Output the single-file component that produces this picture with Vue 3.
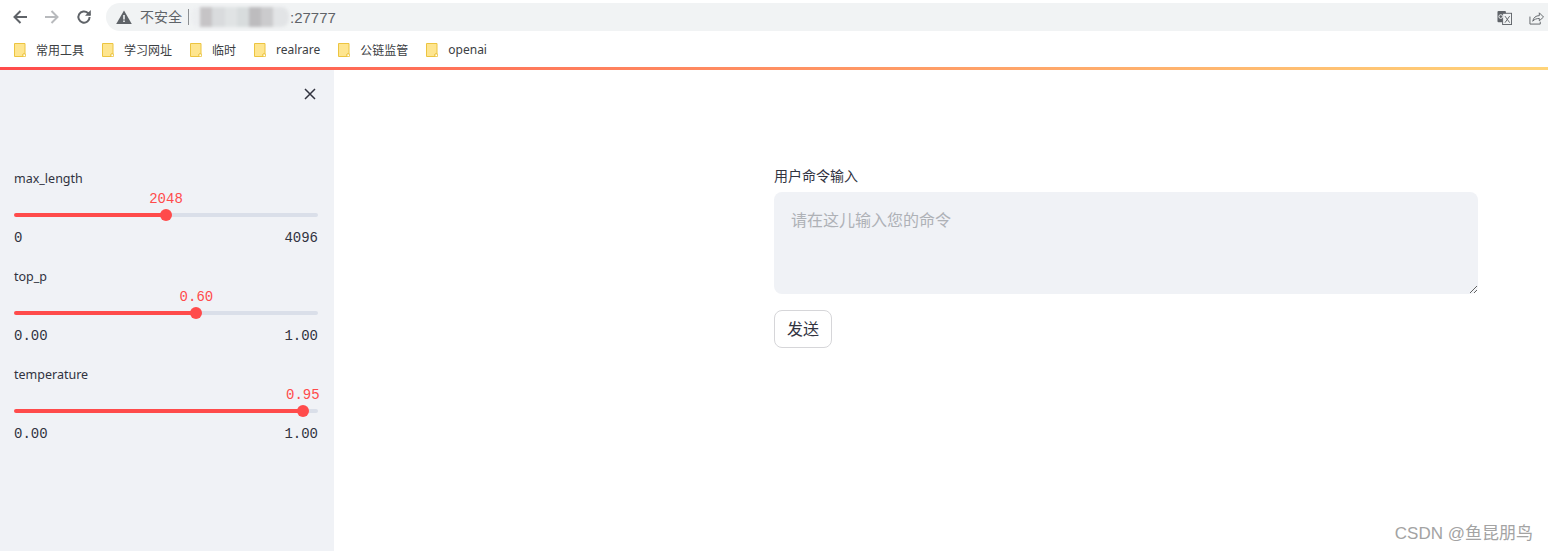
<script setup>
const bookmarks = [
  { name: '常用工具' },
  { name: '学习网址' },
  { name: '临时' },
  { name: 'realrare' },
  { name: '公链监管' },
  { name: 'openai' }
]
const sliders = [
  { label: 'max_length', value: '2048', min: '0', max: '4096', pct: 50 },
  { label: 'top_p', value: '0.60', min: '0.00', max: '1.00', pct: 60 },
  { label: 'temperature', value: '0.95', min: '0.00', max: '1.00', pct: 95 }
]
const blurs = [
  { w: 9, c: '#eceef0' }, { w: 12, c: '#c6c4c6' }, { w: 13, c: '#d9dbdd' }, { w: 12, c: '#e0e3e4' },
  { w: 12, c: '#d8dcdd' }, { w: 12, c: '#bdbcbe' }, { w: 12, c: '#cbcbcd' }, { w: 16, c: '#e2e4e6' }
]
</script>

<template>
  <div class="page">
    <header class="toolbar">
      <div class="nav">
        <svg class="nav-icon" viewBox="0 0 16 16" fill="none" stroke="#5f6368" stroke-width="2"><path d="M15 8H2.500M8.500 2L2.500 8l6 6" /></svg>
        <svg class="nav-icon" viewBox="0 0 16 16" fill="none" stroke="#b8babd" stroke-width="2"><path d="M1 8h12.500M7.500 2l6 6-6 6" /></svg>
        <svg class="nav-icon" viewBox="0 0 16 16" fill="none" stroke="#5f6368" stroke-width="2"><path d="M13.600 8a5.600 5.600 0 1 1-1.700-4L14 6" /><path d="M14.800 1v5.800H9z" fill="#5f6368" stroke="none" /></svg>
      </div>
      <div class="omnibox">
        <svg class="warn" viewBox="0 0 16 14"><path d="M8 0.500L15.800 14H0.200z" fill="#5f6368" /><path d="M7.200 5h1.600v4.600H7.200zM7.200 10.600h1.600v1.500H7.200z" fill="#f1f3f4" /></svg>
        <span class="insecure">不安全</span>
        <span class="sep"></span>
        <span class="blurred"><i v-for="(b, i) in blurs" :key="i" :style="{ width: b.w + 'px', background: b.c }"></i></span>
        <span class="port">:27777</span>
        <span class="spacer"></span>
        <svg class="end-icon" viewBox="0 0 16 16"><rect x="0.500" y="1" width="9" height="12" rx="1" fill="#5f6368" /><rect x="6" y="3.500" width="9.500" height="12" fill="#f1f3f4" stroke="#5f6368" /><path d="M8.500 6.500l5 7M13.500 6.500l-5 7" stroke="#5f6368" fill="none" /><circle cx="4" cy="7" r="2" fill="none" stroke="#f1f3f4" /></svg>
        <svg class="end-icon share" viewBox="0 0 16 16" fill="none" stroke="#5f6368" stroke-width="1"><path d="M1 7v8h11v-2.500" /><path d="M4 12c.6-4 3.500-6 7-6V3l4.500 4.500L11 11.500V9c-3 0-5.500 1-7 3z" /></svg>
      </div>
    </header>
    <nav class="bookmarks">
      <div v-for="b in bookmarks" :key="b.name" class="bookmark">
        <svg class="folder" viewBox="0 0 12 14"><path d="M.5.5h10.500v10.500h-2v2.500H.5z" fill="#fee58f" stroke="#ecc440" /><path d="M9 11h2.500v2.500H9z" fill="#fff" stroke="#ecc440" stroke-width=".8" /></svg>
        <span class="bookmark-name">{{ b.name }}</span>
      </div>
    </nav>
    <div class="rainbow"></div>
    <div class="app">
      <aside class="sidebar">
        <div class="close-row">
          <svg class="close" viewBox="0 0 12 12" fill="none" stroke="#31333f" stroke-width="1.500"><path d="M1 1l10 10M11 1L1 11" /></svg>
        </div>
        <div class="sliders">
          <div v-for="s in sliders" :key="s.label" class="slider">
            <div class="slider-label">{{ s.label }}</div>
            <div class="track-wrap">
              <div class="track" :style="{ background: `linear-gradient(to right, #ff4b4b ${s.pct}%, #dadfe9 ${s.pct}%)` }">
                <div class="thumb" :style="{ left: s.pct + '%' }">
                  <span class="thumb-value">{{ s.value }}</span>
                </div>
              </div>
            </div>
            <div class="ticks"><span>{{ s.min }}</span><span>{{ s.max }}</span></div>
          </div>
        </div>
      </aside>
      <main class="main">
        <label class="field-label">用户命令输入</label>
        <textarea class="command" placeholder="请在这儿输入您的命令"></textarea>
        <button class="send">发送</button>
      </main>
    </div>
    <div class="watermark">CSDN @鱼昆朋鸟</div>
  </div>
</template>

<style>
html, body { margin: 0; background: #fff; overflow: hidden; }
</style>

<style scoped>
.page {
  width: 1548px;
  height: 551px;
  position: relative;
  display: flex;
  flex-direction: column;
  overflow: hidden;
  font-family: "Noto Sans", "Noto Sans CJK SC", sans-serif;
  color: #31333f;
}
.toolbar {
  height: 34px;
  flex: none;
  display: flex;
  align-items: flex-start;
  box-sizing: border-box;
  padding: 3px 0 0 12px;
}
.nav {
  display: flex;
  gap: 16px;
  width: 94px;
  flex: none;
  padding-top: 6px;
}
.nav-icon { width: 16px; height: 16px; display: block; }
.omnibox {
  flex: 1;
  height: 28px;
  background: #f1f3f4;
  border-radius: 14px 0 0 14px;
  display: flex;
  align-items: center;
  padding: 0 4px 0 10px;
  font-size: 13px;
  color: #5f6368;
}
.warn { width: 16px; height: 14px; flex: none; }
.insecure { margin: 0 0 2px 8px; color: #5f6368; font-family: "Noto Sans CJK SC", sans-serif; font-size: 14px; line-height: 20px; }
.sep { width: 1px; height: 16px; background: #8a8d90; margin-left: 6px; }
.blurred {
  display: flex;
  height: 20px;
  margin-left: 2px;
  filter: blur(1.500px);
  border-radius: 8px;
  overflow: hidden;
}
.blurred i { display: block; height: 20px; }
.port { font-size: 15px; font-family: "Liberation Sans", sans-serif; color: #5f6368; margin-left: 1px; }
.spacer { flex: 1; }
.end-icon { width: 15px; height: 15px; flex: none; }
.share { margin-left: 17px; }
.bookmarks {
  height: 32px;
  margin-bottom: 1px;
  flex: none;
  display: flex;
  align-items: center;
  padding-left: 14px;
  gap: 18px;
  font-size: 12px;
  color: #3c4043;
}
.bookmark { display: flex; align-items: center; gap: 10px; }
.bookmark-name { padding-bottom: 1px; }
.folder { width: 12px; height: 14px; flex: none; }
.rainbow {
  height: 3px;
  flex: none;
  background: linear-gradient(90deg, #ff4b4b, #ffd479);
}
.app { flex: 1; display: flex; min-height: 0; }
.sidebar {
  width: 334px;
  flex: none;
  box-sizing: border-box;
  background: #f0f2f6;
  padding: 0 16px 0 14px;
}
.close-row { height: 48px; display: flex; justify-content: flex-end; padding: 18px 2px 0 0; box-sizing: border-box; }
.close { width: 12px; height: 12px; }
.sliders { padding-top: 51px; display: flex; flex-direction: column; gap: 21px; }
.slider { height: 77px; }
.slider-label { font-size: 12.500px; line-height: 20px; }
.track-wrap { padding-top: 24px; }
.track { height: 4px; border-radius: 2px; position: relative; }
.thumb {
  position: absolute;
  top: -4px;
  width: 12px;
  height: 12px;
  margin-left: -6px;
  border-radius: 50%;
  background: #ff4b4b;
}
.thumb-value {
  position: absolute;
  bottom: 13px;
  left: 50%;
  transform: translateX(-50%);
  font-family: "Liberation Mono", monospace;
  font-size: 14px;
  line-height: 18px;
  color: #ff4b4b;
}
.ticks {
  display: flex;
  justify-content: space-between;
  margin-top: 12px;
  font-family: "Liberation Mono", monospace;
  font-size: 14px;
  line-height: 18px;
}
.main {
  flex: 1;
  display: flex;
  flex-direction: column;
  align-items: flex-start;
  padding: 96px 70px 0 440px;
  min-width: 0;
}
.field-label { font-size: 14px; line-height: 20px; color: #31333f; margin-bottom: 6px; }
.command {
  width: 704px;
  height: 102px;
  flex: none;
  box-sizing: border-box;
  border: 0;
  outline: 0;
  border-radius: 8px;
  background: #f0f2f6;
  padding: 15px 17px;
  font-family: "Noto Sans CJK SC", sans-serif;
  font-size: 16px;
  line-height: 24px;
  color: #31333f;
  display: block;
}
.command::placeholder { color: #aeb1b6; opacity: 1; }
.send {
  margin-top: 16px;
  width: 58px;
  height: 38px;
  box-sizing: border-box;
  background: #fff;
  border: 1px solid #d6d6d9;
  border-radius: 8px;
  font-family: "Noto Sans CJK SC", sans-serif;
  font-size: 16px;
  color: #31333f;
  padding: 0 0 2px;
}
.watermark {
  position: absolute;
  right: 15px;
  bottom: 6px;
  font-family: "Liberation Sans", "Noto Sans CJK SC", sans-serif;
  font-size: 17px;
  line-height: 22px;
  color: #a3a3a3;
}
</style>
